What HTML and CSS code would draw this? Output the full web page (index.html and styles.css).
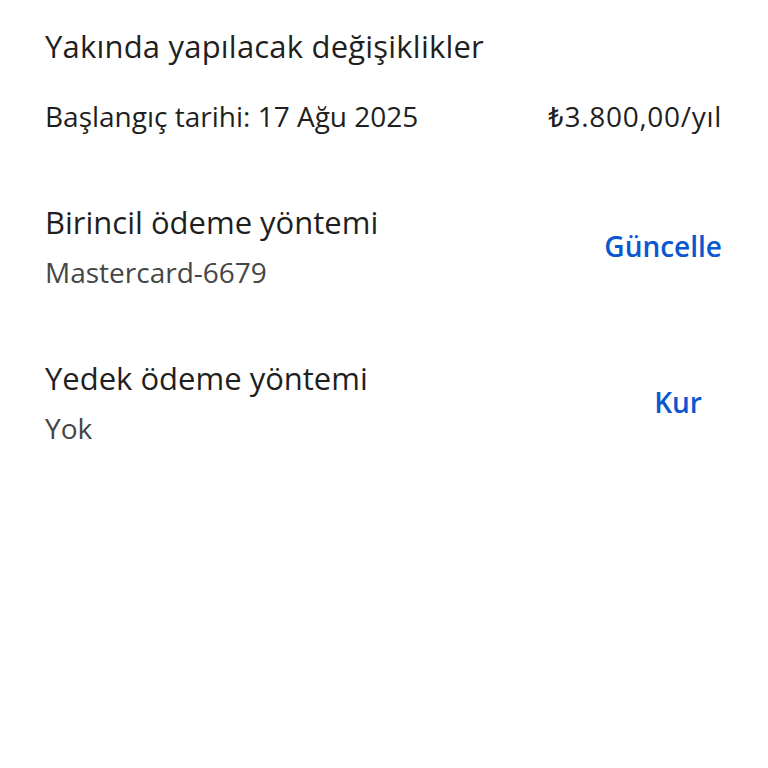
FILE: index.html
```html
<!DOCTYPE html>
<html lang="tr">
<head>
    <meta charset="UTF-8">
    <meta name="viewport" content="width=device-width, initial-scale=1.0">
    <title>Ödeme ayarları</title>
    <link rel="stylesheet" href="styles.css">
</head>
<body>
    <div class="page">
        <section class="changes">
            <h1 class="section-title">Yakında yapılacak değişiklikler</h1>
            <div class="price-row">
                <span class="start-date">Başlangıç tarihi: 17 Ağu 2025</span>
                <span class="price">₺3.800,00/yıl</span>
            </div>
        </section>

        <section class="method-row primary">
            <div class="method-info">
                <div class="method-title">Birincil ödeme yöntemi</div>
                <div class="method-value">Mastercard-6679</div>
            </div>
            <button class="text-button">Güncelle</button>
        </section>

        <section class="method-row backup">
            <div class="method-info">
                <div class="method-title">Yedek ödeme yöntemi</div>
                <div class="method-value">Yok</div>
            </div>
            <button class="text-button">Kur</button>
        </section>
    </div>
</body>
</html>
```

FILE: styles.css
```css
body {
    margin: 0;
    background: #fff;
    color: #1f1f1f;
    font-family: "Open Sans", Roboto, Arial, sans-serif;
}

.page {
    padding: 26px 46px 0 45px;
}

.section-title {
    margin: 0;
    font-size: 31px;
    font-weight: 400;
    line-height: 40px;
    letter-spacing: 0.2px;
}

.price-row {
    display: flex;
    justify-content: space-between;
    align-items: baseline;
    margin-top: 30px;
    font-size: 28px;
    line-height: 40px;
}

.price {
    letter-spacing: 0.7px;
}

.method-row {
    display: flex;
    justify-content: space-between;
    align-items: flex-start;
}

.primary {
    margin-top: 66px;
}

.backup {
    margin-top: 56px;
}

.method-title {
    font-size: 31px;
    line-height: 40px;
}

.method-value {
    font-size: 28px;
    line-height: 60px;
    color: #444746;
}

.text-button {
    min-width: 88px;
    margin-top: 24px;
    padding: 0;
    border: none;
    background: none;
    color: #0b57d0;
    font-family: inherit;
    font-size: 28px;
    font-weight: 600;
    line-height: 40px;
    text-align: center;
    cursor: pointer;
}
```
